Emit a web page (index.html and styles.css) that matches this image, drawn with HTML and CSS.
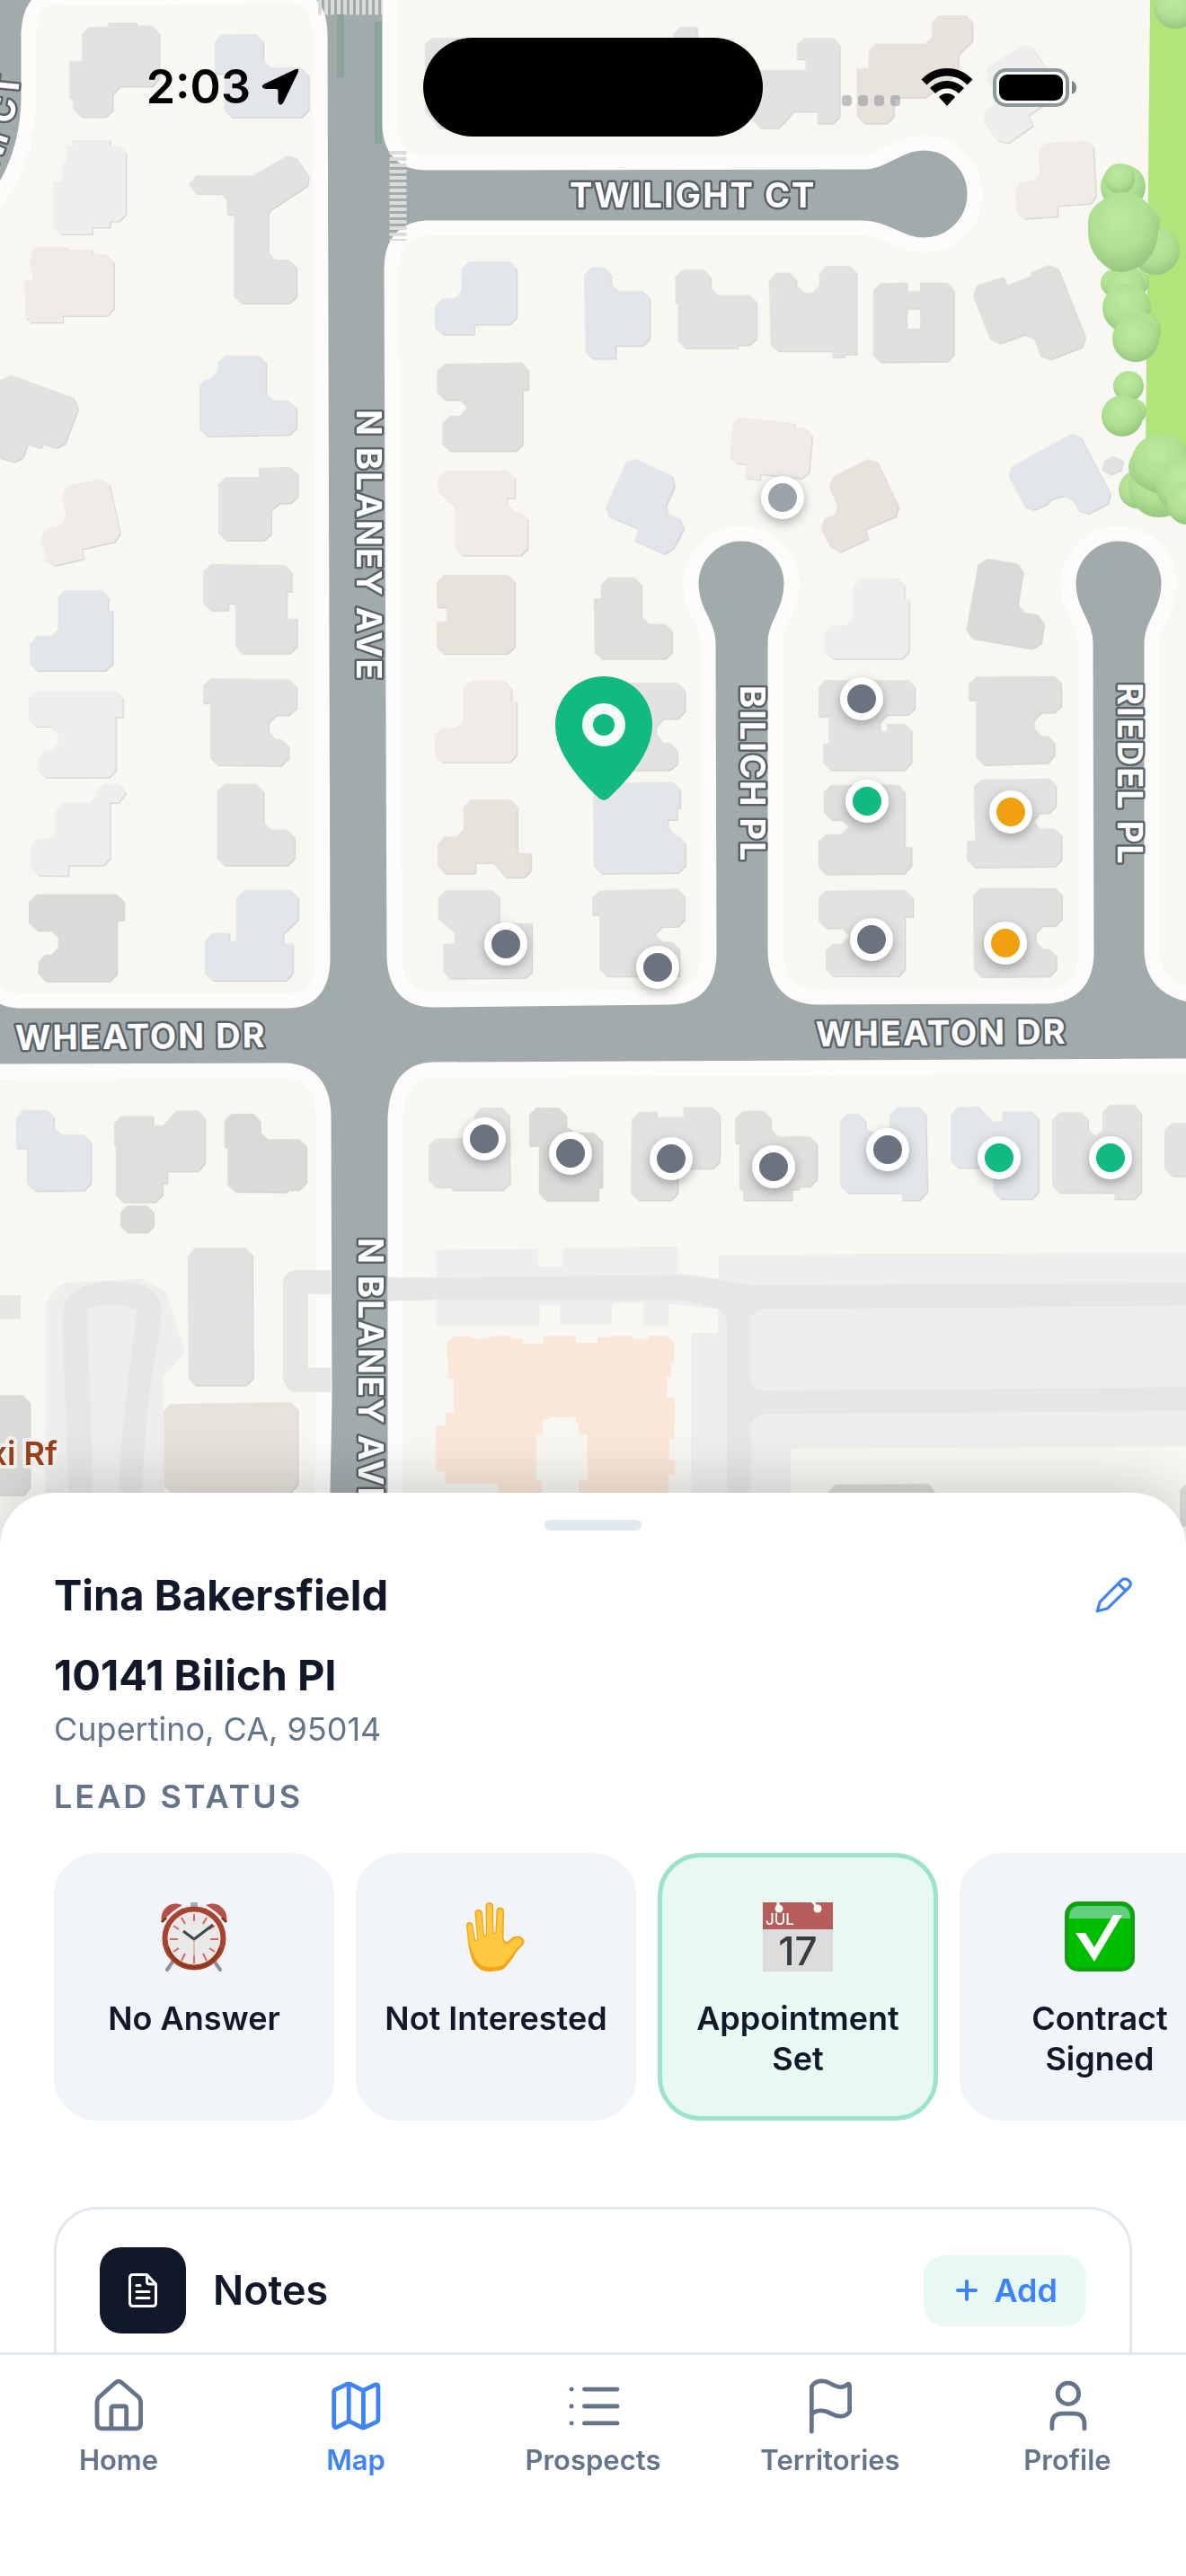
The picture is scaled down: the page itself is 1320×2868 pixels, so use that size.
FILE: index.html
```html
<!DOCTYPE html>
<html lang="en">
<head>
<meta charset="utf-8">
<meta name="viewport" content="width=device-width, initial-scale=1">
<title>Lead map</title>
<link rel="stylesheet" href="styles.css">
</head>
<body>
<div class="app">
  <header class="status-bar">
    <div class="status-left">
      <span class="clock">2:03</span>
      <svg class="location" viewBox="0 0 42 42" aria-hidden="true"><path d="M37 1.500Q43-1 40.500 5L24.500 38Q21 43.500 18.500 38V25.500Q18.500 23 16 23H4Q-2 21 3 17.500Z"/></svg>
    </div>
    <div class="island"></div>
    <div class="status-right">
      <svg class="signal" viewBox="0 0 66 12" aria-hidden="true"><rect width="11" height="12" rx="4"/><rect x="18" width="11" height="12" rx="4"/><rect x="36" width="11" height="12" rx="4"/><rect x="54" width="11" height="12" rx="4"/></svg>
      <svg class="wifi" viewBox="0 0 58 42" aria-hidden="true"><path d="M29 0C40 0 50 4.500 57.500 12.500L51.500 18.500C45.500 12 37.500 8.500 29 8.500S12.500 12 6.500 18.500L.5 12.500C8 4.500 18 0 29 0Z"/><path d="M29 14C36 14 43 17 48 22L42 28C38.500 24.500 34 22.500 29 22.500S19.500 24.500 16 28L10 22C15 17 22 14 29 14Z"/><path d="M29 28Q34.500 28 38 32L29 42L20 32Q23.500 28 29 28Z"/></svg>
      <svg class="battery" viewBox="0 0 94 43" aria-hidden="true"><rect class="shell" x="2" y="2" width="81" height="39" rx="13"/><rect x="7" y="7" width="71" height="29" rx="9"/><path class="cap" d="M88 14Q93 16 93 21.500T88 29Z"/></svg>
    </div>
  </header>

  <main class="content">
    <section class="map" aria-label="Map">
      <svg class="map-canvas" viewBox="0 0 1320 1740" preserveAspectRatio="xMidYMin slice">
        <defs>
          <radialGradient id="leaf" cx=".45" cy=".35" r=".65"><stop offset="0" stop-color="#bdeaa0"/><stop offset=".6" stop-color="#b0e092"/><stop offset="1" stop-color="#97c780"/></radialGradient>
          <path id="ct-line" d="M-26 226Q18 160 22 82"/>
        </defs>

        <!-- city blocks -->
        <g class="blocks">
          <path d="M-20 250L6 208Q31 165 32 110V36Q34-2 60-2L320-4Q356-4 356 40L359 1066Q359 1114 320 1114H20Q-10 1112-20 1080Z"/>
          <path d="M434-20V140Q436 181 475 181L960 180C985 180 1000 159 1028 159A57 57 0 0 1 1028 273C1002 273 985 254 960 254H475Q436 256 436 300L439 1066Q441 1113 482 1113L744 1110Q789 1110 789 1060L788 715C788 695 769 680 769 650A56 56 0 0 1 881 650C881 680 863 695 863 715V1060Q865 1110 910 1110L1165 1109Q1209 1106 1209 1060L1208 715C1208 695 1189 680 1189 650A56 56 0 0 1 1301 650C1301 680 1282 695 1282 715V1060Q1284 1106 1340 1109V-20Z"/>
          <path d="M-20 1193L318 1192Q360 1194 360 1245L361 1560L357 1760H-20Z"/>
          <path d="M440 1760V1245Q442 1192 482 1191L1340 1187V1760Z"/>
        </g>

        <!-- park and trees -->
        <path class="park" d="M1280 0H1320V500H1275Z"/>
        <g class="trees">
          <circle cx="1308" cy="8" r="24"/>
          <circle cx="1286" cy="279" r="27"/><circle cx="1250" cy="208" r="25"/><circle cx="1246" cy="199" r="17"/>
          <circle cx="1240" cy="315" r="15"/><circle cx="1264" cy="314" r="15"/><circle cx="1253" cy="320" r="22"/><circle cx="1254" cy="343" r="27"/><circle cx="1272" cy="368" r="20"/><circle cx="1264" cy="377" r="26"/>
          <circle cx="1269" cy="248" r="22"/><circle cx="1238" cy="248" r="27"/><circle cx="1248" cy="276" r="27"/><ellipse cx="1250" cy="258" rx="39" ry="44"/>
          <circle cx="1256" cy="430" r="17"/><circle cx="1262" cy="458" r="14"/><circle cx="1249" cy="463" r="23"/>
          <circle cx="1266" cy="545" r="21"/><circle cx="1290" cy="542" r="34"/><circle cx="1278" cy="520" r="22"/><circle cx="1292" cy="516" r="33"/><circle cx="1316" cy="540" r="30"/><circle cx="1322" cy="560" r="24"/>
        </g>

        <!-- crossings and cycle lanes -->
        <path class="crossing" d="M354 7H426"/>
        <path class="crossing" d="M443 168V268"/>
        <path class="bike" d="M379 16V86M421 24V160"/>

        <!-- parking lots and service lanes -->
        <g transform="translate(0 1120) scale(.42092 .35714)">
          <path class="lot" d="M120 1568V950Q130 880 180 862L375 850L440 892L490 1080L432 1155V1568ZM1155 760L1424 757V812H1487V755L1791 750V830L1900 850V776L3200 768V1372L2090 1380V1568H1828V1020H1898V945L1768 928V998H1700V926H1619V992H1480V932H1427V998H1155Z"/>
          <path class="lane" d="M180 1568C180 1300 166 1150 166 960C170 880 240 858 300 858C370 860 425 880 428 945C415 1100 378 1250 376 1568H312C318 1300 350 1080 362 948Q290 915 232 946C228 1080 245 1200 244 1568ZM0 902H55V976H0ZM875 823H780Q748 830 748 870V1150Q752 1200 780 1203H875V1128H815V898H875ZM1026 846L1155 847L1800 838C1900 850 1950 870 2010 870L3200 862V934L2020 945Q1985 950 1985 985V1160Q1985 1195 2020 1198L3200 1188V1262L2020 1273Q1985 1280 1985 1320V1568H1922V1000Q1922 945 1880 938L1810 916H1155L1026 920Z"/>
          <path class="school" d="M1182 1050L1200 1030H1245V1037H1290V1030L1350 1028V1037H1382V1053H1436V1028H1523V1050H1580V1034H1616V1028H1673V1037H1715V1028H1762L1782 1047V1113H1775V1158H1763V1222H1784V1302H1782V1350H1769V1415H1785V1463H1768V1568H1530V1480H1553V1335H1530V1302H1523V1282H1451V1288H1435V1335H1418V1480H1433V1568H1317V1490H1177V1452H1153V1308H1178V1268H1200V1162H1185Z"/>
        </g>

        <g class="buildings">
          <g transform="scale(.42092 .35714)">
            <path class="gray" d="M217 105L237 83H285V70H361V80H402L421 105V245L402 270H317L298 293V343L279 365H215L193 340V307H184V190H217Z"/>
            <path class="blue" d="M585 108L676 106L696 130V190L715 210H795L816 235V343L797 366H612L593 343V230H568V130Z"/>
            <path class="light" d="M192 437H291V454H315L333 475V668L315 690H291V709H244V730H160L141 708V567H167V508H176V454H192Z"/>
            <path class="gray" d="M499 575L519 547H668L760 485L785 493L817 550L812 580L715 655L709 668V787L727 809H763L784 832V924L765 946H638L619 925V670H600V625L583 604H519Z"/>
            <path class="warm" d="M87 771H178V780H245V793H281L301 817V962L283 985H166V1006H79V995H68L64 875H88L79 817Z"/>
            <path class="gray" d="M-10 1190L30 1170L195 1240L207 1273L172 1383L149 1397L113 1384L108 1397L73 1385L60 1427L37 1441L-10 1424Z"/>
            <path class="blue" d="M595 1108H684L703 1131V1226L722 1248H762L784 1272V1335L765 1356L548 1360L527 1338V1203L545 1182H555L576 1158V1130Z"/>
            <path class="gray" d="M684 1459L765 1455L787 1478V1548L768 1569L737 1570L717 1591V1664L698 1685H598L577 1662V1508L598 1487H684Z"/>
            <path class="warm" d="M164 1545L180 1515L264 1493L289 1510L318 1662L303 1689L217 1712L222 1742L145 1763L122 1748L108 1678L124 1647L162 1636L176 1611Z"/>
            <path class="blue" d="M1240 815H1347L1366 837V990L1347 1012H1254V1043H1170L1150 1021V955L1169 930H1202L1220 908V837Z"/>
            <path class="stone" d="M1176 1134L1379 1130L1397 1153V1216H1382V1384L1364 1406H1189L1170 1383V1318L1190 1296H1217L1235 1271L1216 1247H1176L1156 1225V1156Z"/>
            <path class="warm" d="M1178 1467H1340L1361 1490V1553H1340V1573L1360 1595H1374L1395 1620V1710L1377 1732H1222L1203 1710V1580L1158 1530V1490Z"/>
            <path class="gray" d="M1124 138L1142 118H1240V400H1160L1124 345Z"/>
          </g>
          <g transform="translate(660 0) scale(.42092 .35714)">
            <path class="blue" d="M-4 833H28L47 856V886L66 907H131L150 930V1055L132 1078H60V1118H-2L-20 1098L-23 857Z"/>
            <path class="gray" d="M237 841H292L311 864V898L330 919H412L432 943V1055L413 1075H383V1085H243L224 1062V943H217V864Z"/>
            <path class="gray" d="M484 850H519L537 872V890L557 913H580L598 890V852L617 829H678L697 852V1105H665V1113H632V1095H489L469 1073L465 877Z"/>
            <path class="stone" fill-rule="evenodd" d="M760 883L829 881V908H865V881H935L954 905V1105L936 1127L760 1129L741 1107V905ZM829 962V1024H865V962Z"/>
            <path class="stone" d="M1015 890L1084 863L1094 890L1159 860L1157 849L1205 826L1230 837L1302 1052L1292 1083L1208 1121L1183 1109L1166 1055L1142 1043L1075 1071L1049 1055L1005 922Z"/>
            <path class="warm" d="M370 1318L389 1300L533 1320V1332L560 1336L579 1360L571 1473L550 1492L443 1478L441 1496L403 1490L405 1448L380 1444L361 1422Z"/>
            <path class="blue" d="M88 1440L112 1431L208 1483L216 1515L193 1578L198 1603L230 1618L240 1648L213 1708L189 1728L109 1686L121 1650L41 1610L34 1580Z"/>
            <path class="pink" d="M635 1485L728 1431L752 1441L808 1580L800 1610L720 1650L728 1680L654 1721L627 1703L603 1648L611 1617L640 1603L646 1575L624 1517Z"/>
            <path class="blue" d="M1107 1455L1265 1352L1290 1363L1368 1540L1361 1570L1310 1602L1284 1592L1270 1560L1246 1545L1210 1557L1200 1572L1166 1590L1142 1580L1099 1484Z"/>
            <path class="gray" d="M1353 1435L1376 1422L1401 1435L1396 1465L1369 1479L1345 1465Z"/>
            <path class="gray" d="M539 140L557 118H634L652 140V363L634 385H593V348H530L491 399H443L400 350V218H562V184H539ZM212 105L232 84H275V125H212Z"/>
            <path class="pink" d="M748 136H878L896 115V70L915 47H985L1003 70V127L966 170V225L878 304H795V362L776 385H718L697 362V213H729V158Z"/>
            <path class="light" d="M1042 210L1135 141L1161 148L1220 250L1215 310L1151 360L1163 392L1097 446L1070 438L1032 375L1037 345L1075 310L1042 250Z"/>
            <path class="warm" d="M1198 446L1300 438L1323 457L1330 612L1314 635L1228 641L1229 675L1141 682L1120 660L1115 590L1132 567L1164 562L1181 545L1178 470Z"/>
          </g>
          <g transform="translate(0 560) scale(.42092 .35714)">
            <path class="gray" d="M557 190L752 193L771 215V276H758V361H785V447L765 469H640L622 445V314H603V335H557L537 312V213Z"/>
            <path class="blue" d="M172 272H267L286 295V335H298V500L279 523H98L79 500V437L98 414H135L153 393V294Z"/>
            <path class="light" d="M95 586H305L325 610V668H306V833L288 856H120L100 832V797L120 773H136L154 748V720L135 697H96L77 675V608Z"/>
            <path class="gray" d="M557 546L763 550L784 573V640L763 662H730L710 685V712L728 736H743L763 760V795L743 819L575 817L556 794V625H537V570Z"/>
            <path class="light" d="M275 877H313L333 905L313 935H291V1108L273 1130H181V1163L101 1161L81 1135V1070L101 1047H130L148 1025V958L167 935H238L254 912V900Z"/>
            <path class="gray" d="M595 875H677L697 900V998L716 1018H759L779 1043V1108L760 1130H593L574 1108V898Z"/>
            <path class="dark" d="M98 1220H308L328 1243V1301H309V1468L290 1491H121L101 1468V1432L120 1408H136L154 1385V1355L136 1333H98L77 1310V1243Z"/>
            <path class="blue" d="M645 1207H768L788 1230V1300L749 1343V1374H774V1467L756 1489H562L542 1465V1365L562 1341H606V1366H625V1230Z"/>
            <path class="pink" d="M1174 224H1343L1361 247V448L1342 470H1173L1155 449V370H1181V326H1155V246Z"/>
            <path class="warm" d="M1245 555H1333L1352 578V619H1366V785L1348 808H1168L1150 785V722L1170 700H1205L1225 679V580Z"/>
            <path class="pink" d="M1245 925H1349L1368 947V1091H1404V1145L1386 1167H1338L1302 1122H1257V1155H1177L1157 1131V1063L1177 1039H1207L1226 1017V947Z"/>
            <path class="gray" d="M1178 1207H1301L1320 1230V1310H1407V1460L1390 1480L1190 1483L1172 1460V1374H1202V1338L1159 1295V1228Z"/>
          </g>
          <g transform="translate(660 560) scale(.42092 .35714)">
            <path class="stone" d="M40 232H108L128 256V355L147 377H190L209 400V464L191 486H23L4 465L2 297H21V256Z"/>
            <path class="light" d="M709 234H804L823 257V301H835V463L817 486H633L613 463V403L632 381H670L689 358V257Z"/>
            <path class="dark" d="M1043 173L1122 189L1137 215L1123 315L1139 341L1175 347L1193 377L1185 437L1161 455L1003 422L987 395L1018 192Z"/>
            <path class="gray" d="M10 560H223L243 585V650L223 673H185L166 697V720L186 748H204L223 772V812L203 833H10Z"/>
            <path class="gray" d="M614 552H833L851 573V640L833 660H777L758 683V711H777V688H823L842 710V810L822 833H628L609 810V750H623V665H596V575Z"/>
            <path class="stone" d="M1014 541L1220 540L1238 562V633L1219 654H1184L1165 678V700L1184 725H1202L1220 748V787L1202 811L1033 817L1013 792V615H993V563Z"/>
            <path class="blue" d="M20 873L210 870L230 893V951H222V988H198V1010L218 1038H225L244 1062V1130L225 1153L22 1155L2 1132L0 896Z"/>
            <path class="stone" d="M631 878H805L824 900V1072H842V1130L823 1155L616 1158L596 1135V1055L615 1033H657L676 1009L657 988H630L610 963V900Z"/>
            <path class="gray" d="M1027 862L1206 859L1224 882V945L1205 967H1180L1163 990L1180 1015H1219L1239 1037V1110L1222 1133L1009 1136L989 1112V1053H1010L1007 883Z"/>
            <path class="gray" d="M18 1208L222 1202L242 1225V1300L223 1321H182L163 1345L181 1367H208L228 1390V1475L37 1476L17 1452V1284H-2V1230Z"/>
            <path class="gray" d="M615 1208L825 1206L846 1231V1290H825V1453L808 1475H633L615 1453V1395L633 1374H658L677 1349L659 1325H615L596 1303V1230Z"/>
            <path class="stone" d="M1024 1200L1222 1201L1240 1222V1296L1222 1319H1188L1170 1340V1367L1190 1390H1206L1225 1413V1454L1206 1476L1027 1477L1007 1455L1005 1222Z"/>
          </g>
          <g transform="translate(0 1120) scale(.42092 .35714)">
            <path class="blue" d="M61 325H124L142 347V378L162 401H221L240 425V552L222 575L92 577L71 552V444H43V348Z"/>
            <path class="stone" d="M320 343H404V372H430L466 326H523L542 350V490L523 515H442V553H430V588L410 612H326L306 590V437H302V365Z"/>
            <path class="dark" d="M336 622H388L406 643V685L389 706H336L318 685V644Z"/>
            <path class="dark" d="M612 336H669L688 360V394L707 415H790L810 437V551L790 573H760V581L622 579L602 557V440H593V358Z"/>
            <path class="gray" d="M515 754H648L667 776L669 1160L650 1183H517L498 1160L496 778Z"/>
            <path class="pink" d="M450 1241L767 1235L787 1258V1490L768 1517H455L433 1495V1262Z"/>
            <path class="dark" d="M-10 1213H60L79 1236V1500L62 1525H-10Z"/>
            <path class="gray" d="M1272 317H1327L1346 340L1348 552L1329 574H1194V565H1152L1133 543V435L1152 412H1254V340Z"/>
            <path class="dark" d="M1418 317L1477 318L1497 341V376L1520 395H1570L1592 420V566H1582V607H1444L1425 585V436H1399V340Z"/>
          </g>
          <g transform="translate(660 1120) scale(.42092 .35714)">
            <path class="gray" d="M121 331L167 330V347H239V316H316L335 340V485L316 507H224V583L206 606H120L100 583L102 355Z"/>
            <path class="stone" d="M395 327H450L470 350V383L488 406H573L592 430V540L573 563H544V572H526V606H397V571H387V428H376V350Z"/>
            <path class="blue" d="M671 336H702L721 360V382L750 400L784 380V340L803 316H861L880 338L884 580L863 605H817V583H673L653 560V358Z"/>
            <path class="blue" d="M965 315L1020 314L1055 360H1082V329H1160L1178 350V580L1160 602H1077L1058 578V504H964L946 482V338Z"/>
            <path class="gray" d="M1233 332L1290 331L1309 354V385L1329 407L1347 385V332L1366 309H1430L1449 332V580L1430 602H1378V582H1233L1214 558V355Z"/>
            <path class="gray" d="M1532 364H1600V531H1532L1511 508V387Z"/>
            <path class="dark" d="M640 1492L887 1490L906 1520V1568H600V1545ZM1552 1510L1575 1480V1620H1552Z"/>
          </g>
        </g>

        <g class="street">
          <text x="634" y="231">TWILIGHT CT</text>
          <text transform="translate(17 1169) rotate(-.6)">WHEATON DR</text>
          <text transform="translate(908 1165) rotate(-.6)">WHEATON DR</text>
          <text transform="translate(397 456) rotate(90)">N BLANEY AVE</text>
          <text transform="translate(399 1378) rotate(90)">N BLANEY AVE</text>
          <text transform="translate(824 763) rotate(90)">BILICH PL</text>
          <text transform="translate(1244 760) rotate(90)">RIEDEL PL</text>
          <text text-anchor="end"><textPath href="#ct-line" startOffset="100%">NI CT</textPath></text>
        </g>
        <text class="poi" x="64" y="1631" text-anchor="end">xi Rf</text>

        <g class="leads">
          <circle class="muted" cx="871" cy="554" r="20"/>
          <circle cx="563" cy="1051" r="20"/><circle cx="732" cy="1077" r="20"/><circle cx="959" cy="778" r="20"/><circle cx="970" cy="1046" r="20"/>
          <circle cx="539" cy="1268" r="20"/><circle cx="635" cy="1284" r="20"/><circle cx="747" cy="1290" r="20"/><circle cx="861" cy="1299" r="20"/><circle cx="988" cy="1280" r="20"/>
          <circle class="won" cx="965" cy="892" r="20"/><circle class="won" cx="1112" cy="1289" r="20"/><circle class="won" cx="1236" cy="1289" r="20"/>
          <circle class="warn" cx="1125" cy="904" r="20"/><circle class="warn" cx="1119" cy="1050" r="20"/>
        </g>
        <g class="selected-lead">
          <path d="M672 753A54 54 0 0 1 726 807C726 838 700 867 678 888Q672 894 666 888C644 867 618 838 618 807A54 54 0 0 1 672 753Z"/>
          <circle cx="672" cy="807" r="18"/>
        </g>
      </svg>
    </section>

    <section class="sheet">
      <div class="handle"></div>
      <div class="name-row">
        <h1>Tina Bakersfield</h1>
        <button class="edit" type="button" aria-label="Edit name">
          <svg viewBox="0 0 40 40" aria-hidden="true"><path d="M3 37L6 27L28.500 4.500Q32.500 1 36.500 4.500T36.500 12L14 34ZM25.500 8L33 15"/></svg>
        </button>
      </div>
      <h2 class="street-address">10141 Bilich Pl</h2>
      <p class="city">Cupertino, CA, 95014</p>
      <h3 class="eyebrow">LEAD STATUS</h3>

      <div class="statuses">
        <button class="status" type="button">
          <svg class="emoji" viewBox="0 0 78 78" aria-hidden="true">
            <path d="M16 66L9 76M61 66L68 76" stroke="#8b9299" stroke-width="4" stroke-linecap="round"/>
            <path d="M35 1h8v8h-8Z" fill="#a9adb1"/>
            <path d="M3 23C0 10 12-2 26 4Q15 10 3 23ZM75 23C78 10 66-2 52 4Q63 10 75 23Z" fill="#b8504a"/>
            <path d="M3 23L8 18M75 23L70 18" stroke="#8f2f1c" stroke-width="3"/>
            <circle cx="39" cy="41" r="32.500" fill="#e9e9e9" stroke="#a8432f" stroke-width="6"/>
            <path d="M10 48A30 30 0 0 0 68 48" transform="translate(0 3)" fill="none" stroke="#8f3a18" stroke-width="3"/>
            <path d="M39 14v8M39 60v9M12 42h9M57 42h9M25 18l4 7M53 18l-4 7M16 27l6 4M62 27l-6 4M16 56l6-4M62 56l-6-4M25 66l4-8M53 66l-4-8" stroke="#d9695f" stroke-width="2"/>
            <path d="M27 33L39 42L60 26" fill="none" stroke="#3e474c" stroke-width="3"/>
            <path d="M39 42v20" stroke="#e58d62"/>
          </svg>
          <span>No Answer</span>
        </button>
        <button class="status" type="button">
          <svg class="emoji" viewBox="0 0 78 78" aria-hidden="true">
            <path d="M6 27Q6 23 9.500 23Q13 23 13.500 27L16 42Q17 44 18 42L15.500 13Q15.500 9 19.500 9Q23.500 9 24 13L26 37Q27 39 28 37L27.500 5Q28 1 31.500 1Q35.500 1 36 5L36.500 34Q37.500 36 38.500 34L39.500 10Q40 6 44 6.500Q48 7 48 11L47.500 41Q49 47 53 44Q60 37 66 39Q72 42 70 47L62 56Q55 68 48 75Q42 78 31 78Q20 78 14 68Q10 60 8 46Z" fill="#f5a31b"/>
            <path d="M7.500 28Q7.500 24.500 9.500 24.500Q12 24.500 12.500 28L15 43Q17 46 19 43L17 13Q17 10.500 19.500 10.500Q22 10.500 22.500 13L25 38Q27 41 29 38L29 5Q29.500 2.500 31.500 2.500Q34 2.500 34.500 5L35.500 35Q37.500 38 39.500 35L41 11Q41.500 8 44 8Q46.500 8.500 46.500 11L46 42Q49 50 54 46Q60 39.500 65 40.500Q69 43 68 46L60 55Q52 66 46 71Q38 74 30 73Q20 72 15 62Q11 54 9 44Z" fill="#ffc83f"/>
          </svg>
          <span>Not Interested</span>
        </button>
        <button class="status is-selected" type="button" aria-pressed="true">
          <svg class="emoji" viewBox="0 0 78 78" aria-hidden="true">
            <path d="M0 30H78V78H0Z" fill="#dedcdb"/>
            <path d="M0 1H78V31H0Z" fill="#b65d5c"/>
            <path d="M17 0V6M55 0Q58 2 59 6" stroke="#fff" stroke-width="3"/>
            <circle cx="18" cy="8" r="4.500" fill="#f2fbf8"/><circle cx="61" cy="8" r="4.500" fill="#f2fbf8"/>
            <text class="cal-month" x="3" y="26">JUL</text>
            <text class="cal-day" x="39" y="71" text-anchor="middle">17</text>
          </svg>
          <span>Appointment Set</span>
        </button>
        <button class="status" type="button">
          <svg class="emoji" viewBox="0 0 78 78" aria-hidden="true">
            <rect x="2" y="2" width="74" height="74" rx="13" fill="#00bd00" stroke="#12a012" stroke-width="4"/>
            <path d="M5 19Q5 5 17 5H61Q73 5 73 19Z" fill="#62cf7c"/>
            <path d="M12 35H23L33 51L54 15H64L33 67Z" fill="#fff"/>
          </svg>
          <span>Contract Signed</span>
        </button>
      </div>

      <section class="notes">
        <span class="notes-icon">
          <svg viewBox="0 0 32 38" aria-hidden="true"><path d="M20.500 1.500H5Q1.500 1.500 1.500 5V33Q1.500 36.500 5 36.500H27Q30.500 36.500 30.500 33V12ZM20.500 1.500V9Q20.500 12 23.500 12H30.500M9 13.500h4M9 20.500h14M9 27.500h14"/></svg>
        </span>
        <h2>Notes</h2>
        <button class="add" type="button">
          <svg viewBox="0 0 24 24" aria-hidden="true"><path d="M12 2V22M2 12H22"/></svg>
          Add
        </button>
      </section>
    </section>
  </main>

  <nav class="tabs" aria-label="Main">
    <a href="#home"><svg viewBox="0 0 24 24" aria-hidden="true"><path d="M4 10.500Q4 9.400 4.800 8.600L11 3.100Q12 2.300 13 3.100L19.400 8.600Q20.200 9.400 20.200 10.500V18.300Q20.200 20.300 18.200 20.300H6Q4 20.300 4 18.300ZM9.300 20V13Q9.300 12 10.300 12H13.900Q14.900 12 14.900 13V20"/></svg>Home</a>
    <a href="#map" class="is-active" aria-current="page"><svg viewBox="0 0 24 24" aria-hidden="true"><path d="M4.300 5.900L8.800 3.800Q9.400 3.600 10 3.800L14.200 5.900Q14.800 6.100 15.300 5.900L19.200 4Q20.300 3.700 20.300 4.900V16.900Q20.300 17.500 19.700 17.800L15.300 19.900Q14.800 20.100 14.200 19.900L10 17.800Q9.400 17.600 8.900 17.800L5 19.800Q3.900 20.100 3.900 19V6.600Q3.900 6.100 4.300 5.900ZM9.400 3.800V17.600M14.800 6V20"/></svg>Map</a>
    <a href="#prospects"><svg viewBox="0 0 24 24" aria-hidden="true"><path d="M8.800 5.700H21M8.800 12H21M8.800 18.300H21M4 5.700h.1M4 12h.1M4 18.300h.1"/></svg>Prospects</a>
    <a href="#territories"><svg viewBox="0 0 24 24" aria-hidden="true"><path d="M5.100 21.400V4.800C6.200 2.500 9.300 2 12 3.500C14.500 5 16.500 5.500 18.200 4Q19.200 3.300 19.200 4.600V14C17.800 16.100 15 16.200 12.300 14.700C9.800 13.200 6.700 13.200 5.100 15"/></svg>Territories</a>
    <a href="#profile"><svg viewBox="0 0 24 24" aria-hidden="true"><circle cx="12.300" cy="7.300" r="3.900"/><path d="M6.300 20.300V18.600Q6.300 14.700 10.200 14.700H14.400Q18.300 14.700 18.300 18.600V20.300"/></svg>Profile</a>
  </nav>
</div>
</body>
</html>
```

FILE: styles.css
```css
* { box-sizing: border-box; }

body {
  margin: 0;
  background: #fff;
  color: #111829;
  font-family: Inter, "Noto Sans", sans-serif;
}

h1, h2, h3, p { margin: 0; }

button {
  padding: 0;
  border: 0;
  background: none;
  color: inherit;
  font: inherit;
  cursor: pointer;
}

.app {
  position: relative;
  display: flex;
  flex-direction: column;
  min-height: 100vh;
}

.content {
  flex: 1;
  display: flex;
  flex-direction: column;
}

/* Status bar, laid over the map */
.status-bar {
  position: absolute;
  inset: 42px 0 auto;
  z-index: 2;
  display: grid;
  grid-template-columns: 1fr 378px 1fr;
  align-items: center;
}

.island {
  height: 110px;
  border-radius: 55px;
  background: #000;
}

.status-left,
.status-right {
  display: flex;
  align-items: center;
}

.status-left {
  justify-content: flex-end;
  gap: 12px;
  padding-right: 138px;
}

.clock {
  color: #000;
  font-size: 52px;
  font-weight: 600;
  line-height: 60px;
}

.location { width: 42px; }

.status-right {
  gap: 22px;
  padding-left: 88px;
}

.signal {
  width: 66px;
  margin-top: 30px;
  fill: #6b7280;
  opacity: .4;
}

.wifi { width: 58px; }
.battery { width: 94px; }

.battery .shell {
  fill: #fff;
  fill-opacity: .6;
  stroke: #8d989b;
  stroke-width: 4;
}

.battery .cap { fill: #7a868a; }

/* Map */
.map {
  position: relative;
  flex: 1;
  min-height: 600px;
  margin-bottom: -78px;
  overflow: hidden;
  background: #a2abac;
}

.map-canvas {
  position: absolute;
  width: 100%;
  height: 100%;
}

.blocks {
  fill: #f8f7f2;
  stroke: #fdfcfa;
  stroke-width: 17;
}

.park { fill: #b0e57c; }
.trees { fill: url(#leaf); }

.crossing {
  fill: none;
  stroke: #dbdcd9;
  stroke-width: 19;
  stroke-dasharray: 4 3;
}

.bike {
  fill: none;
  stroke: #8ba39a;
  stroke-width: 8;
}

.lot { fill: #eeeeee; }
.lane { fill: #e8e6e4; }
.school { fill: #fae7da; }

.buildings { filter: drop-shadow(1px 1px 0 #cfcfcd); }
.gray { fill: #e2e2e2; }
.dark { fill: #dadad8; }
.stone { fill: #e1dfdd; }
.blue { fill: #e2e5ea; }
.warm { fill: #efece8; }
.pink { fill: #e8e2dc; }
.light { fill: #eeeeee; }

.street {
  fill: #fff;
  stroke: #596266;
  stroke-width: 5;
  stroke-linejoin: round;
  paint-order: stroke;
  font-size: 38px;
  font-weight: 700;
  letter-spacing: 2px;
}

.poi {
  fill: #9a3f1d;
  stroke: #f4f1ee;
  stroke-width: 8;
  stroke-linejoin: round;
  paint-order: stroke;
  font-size: 36px;
  font-weight: 600;
}

.leads {
  fill: #6b7280;
  stroke: #fff;
  stroke-width: 8;
  filter: drop-shadow(0 4px 6px rgb(0 0 0 / 30%));
}

.leads .muted { fill: #9ba4a8; }
.leads .won { fill: #12b981; }
.leads .warn { fill: #f1a010; }

.selected-lead path { fill: #12b981; }

.selected-lead circle {
  fill: #12b981;
  stroke: #f3fbf8;
  stroke-width: 12;
}

/* Lead sheet */
.sheet {
  position: relative;
  padding: 30px 60px 0;
  border-radius: 60px 60px 0 0;
  background: #fff;
  box-shadow: 0 -12px 60px rgb(0 0 0 / 16%);
  clip-path: inset(-120px 0 0);
}

.handle {
  width: 108px;
  height: 12px;
  margin: 0 auto 42px;
  border-radius: 6px;
  background: #e2e8f0;
}

.name-row {
  display: flex;
  align-items: center;
  justify-content: space-between;
  margin-bottom: 32px;
}

h1 {
  font-size: 47px;
  font-weight: 700;
  line-height: 60px;
}

.edit {
  width: 42px;
  height: 42px;
}

.edit svg {
  display: block;
  fill: none;
  stroke: #3f83f8;
  stroke-width: 3;
  stroke-linejoin: round;
}

.street-address {
  font-size: 47px;
  font-weight: 700;
  line-height: 54px;
}

.city {
  margin-top: 9px;
  color: #64748b;
  font-size: 36px;
  line-height: 48px;
}

.eyebrow {
  margin: 27px 0 39px;
  color: #64748b;
  font-size: 36px;
  font-weight: 600;
  line-height: 48px;
  letter-spacing: 3px;
}

.statuses {
  display: flex;
  gap: 24px;
  margin-right: -60px;
  overflow-x: auto;
  scrollbar-width: none;
}

.status {
  flex: 0 0 312px;
  display: flex;
  flex-direction: column;
  align-items: center;
  gap: 30px;
  min-height: 298px;
  padding: 49px 20px 40px;
  border: 5px solid #f1f4f9;
  border-radius: 48px;
  background: #f1f4f9;
  font-size: 36px;
  font-weight: 600;
  line-height: 45px;
}

.status.is-selected {
  border-color: #9ce2cc;
  background: #e8f8f3;
}

.emoji {
  width: 78px;
  height: 78px;
}

.cal-month {
  fill: #fff;
  font-size: 17px;
  font-weight: 500;
}

.cal-day {
  fill: #353d43;
  font-size: 44px;
  font-weight: 500;
}

/* The card runs on below the tab bar */
.notes {
  display: flex;
  align-items: center;
  gap: 30px;
  margin: 96px 0 -84px;
  padding: 42px 48px 102px;
  border: 3px solid #e2e8f0;
  border-radius: 48px;
}

.notes-icon {
  display: grid;
  place-items: center;
  width: 96px;
  height: 96px;
  border-radius: 24px;
  background: #111829;
}

.notes-icon svg {
  width: 32px;
  fill: none;
  stroke: #fff;
  stroke-width: 3;
  stroke-linecap: round;
  stroke-linejoin: round;
}

.notes h2 {
  flex: 1;
  font-size: 45px;
  font-weight: 600;
  line-height: 54px;
}

.add {
  display: flex;
  align-items: center;
  gap: 18px;
  height: 79px;
  padding: 0 32px 0 36px;
  border-radius: 24px;
  background: #e8f8f3;
  color: #3f83f8;
  font-size: 36px;
  font-weight: 600;
}

.add svg {
  width: 24px;
  fill: none;
  stroke: currentColor;
  stroke-width: 4;
  stroke-linecap: round;
}

/* Tab bar */
.tabs {
  position: relative;
  display: grid;
  grid-template-columns: repeat(5, 1fr);
  padding: 21px 0 111px;
  border-top: 3px solid #e2e8f0;
  background: #fff;
}

.tabs a {
  display: flex;
  flex-direction: column;
  align-items: center;
  gap: 6px;
  color: #64748b;
  font-size: 31px;
  font-weight: 600;
  line-height: 36px;
  text-decoration: none;
}

.tabs .is-active { color: #3f83f8; }

.tabs svg {
  width: 72px;
  height: 72px;
  fill: none;
  stroke: currentColor;
  stroke-width: 1.6;
  stroke-linecap: round;
  stroke-linejoin: round;
}
```
